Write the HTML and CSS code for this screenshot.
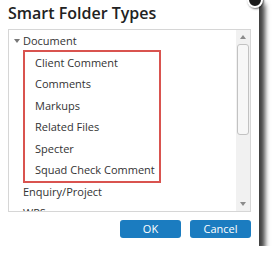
FILE: index.html
```html
<!DOCTYPE html>
<html lang="en">
<head>
    <meta charset="UTF-8">
    <meta name="viewport" content="width=device-width, initial-scale=1.0">
    <title>Smart Folder Types</title>
    <link rel="stylesheet" href="styles.css">
</head>
<body>
    <div class="dialog">
        <span class="close" aria-label="Close"></span>
        <h2 class="dialog-title">Smart Folder Types</h2>

        <div class="list-box">
            <div class="tree">
                <div class="tree-row">
                    <span class="toggle open"></span>Document
                </div>
                <div class="tree-children highlight">
                    <div class="tree-row child">Client Comment</div>
                    <div class="tree-row child">Comments</div>
                    <div class="tree-row child">Markups</div>
                    <div class="tree-row child">Related Files</div>
                    <div class="tree-row child">Specter</div>
                    <div class="tree-row child">Squad Check Comment</div>
                </div>
                <div class="tree-row">
                    <span class="toggle"></span>Enquiry/Project
                </div>
                <div class="tree-row">
                    <span class="toggle"></span>WPS
                </div>
            </div>

            <!-- barra de rolagem desenhada -->
            <div class="scrollbar">
                <div class="scroll-btn"><span class="arrow up"></span></div>
                <div class="scroll-track">
                    <div class="scroll-thumb"></div>
                </div>
                <div class="scroll-btn"><span class="arrow down"></span></div>
            </div>
        </div>

        <div class="actions">
            <button class="btn">OK</button>
            <button class="btn">Cancel</button>
        </div>
    </div>
</body>
</html>
```

FILE: styles.css
```css
* {
    margin: 0;
    padding: 0;
    box-sizing: border-box;
    font-family: 'Open Sans', 'Liberation Sans', Arial, sans-serif;
}

body {
    background: #fff;
    overflow: hidden;
}

.dialog {
    position: relative;
    width: 259px;
    height: 246px;
    padding: 2px 8px 9px 8px;
    background: #fff;
    box-shadow: 6px 4px 5px rgba(0,0,0,0.75);
}

.close {
    position: absolute;
    top: -8px;
    right: -4px;
    width: 16px;
    height: 16px;
    border-radius: 50%;
    background: #1b1b1b;
    border: 2px solid #fff;
    box-shadow: 1px 1px 2px rgba(0,0,0,0.6);
}

.dialog-title {
    font-size: 16px;
    font-weight: 600;
    line-height: 22px;
    color: #222;
}

.list-box {
    display: flex;
    margin-top: 5px;
    height: 183px;
    border: 1px solid #d6d6d6;
    overflow: hidden;
}

.tree {
    flex: 1;
    font-size: 11px;
    color: #333;
}

.tree-row {
    display: flex;
    align-items: center;
    height: 21.5px;
    padding-left: 5px;
    white-space: nowrap;
}

.toggle {
    width: 6px;
    height: 4px;
    margin-right: 3px;
}

.toggle.open {
    border-top: 4px solid #777;
    border-left: 3px solid transparent;
    border-right: 3px solid transparent;
}

.tree-children {
    margin-left: 16px;
    width: 134px;
}

.tree-row.child {
    padding-left: 10px;
}

.highlight {
    outline: 2px solid #d9534f;
}

.scrollbar {
    display: flex;
    flex-direction: column;
    width: 14px;
    background: #f1f1f1;
}

.scroll-btn {
    display: flex;
    justify-content: center;
    align-items: center;
    height: 14px;
}

.arrow {
    width: 0;
    height: 0;
    border-left: 3.5px solid transparent;
    border-right: 3.5px solid transparent;
}

.arrow.up {
    border-bottom: 4px solid #8a8a8a;
}

.arrow.down {
    border-top: 4px solid #8a8a8a;
}

.scroll-track {
    flex: 1;
}

.scroll-thumb {
    height: 91px;
    margin: 0 1px;
    background: #f7f7f7;
    border: 1px solid #c2c2c2;
    border-radius: 3px;
}

.actions {
    display: flex;
    justify-content: flex-end;
    gap: 9px;
    margin-top: 8px;
}

.btn {
    width: 61px;
    height: 18px;
    border: none;
    border-radius: 3px;
    background: #1b7cc0;
    color: #fff;
    font-size: 11px;
    line-height: 18px;
    cursor: pointer;
}
```
